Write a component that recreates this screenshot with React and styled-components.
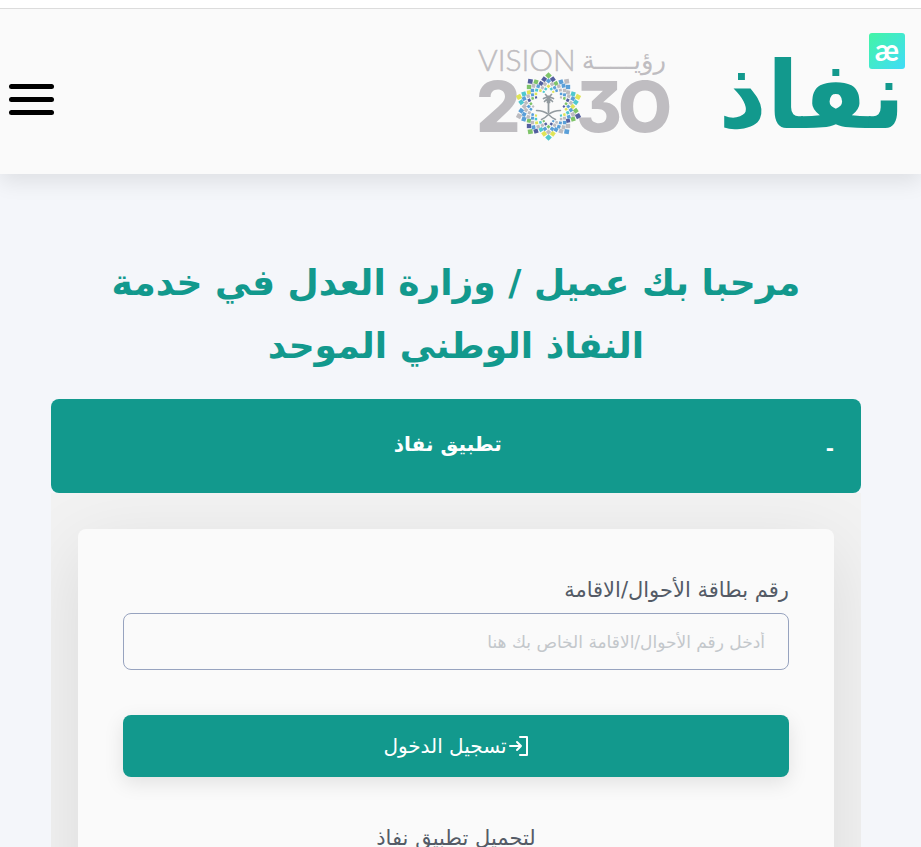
import React from "react";
import styled, { createGlobalStyle } from "styled-components";

const teal = "#12998d";
const arabic = '"DejaVu Sans", "Noto Sans", sans-serif';

const GlobalStyle = createGlobalStyle`
  *, *::before, *::after { box-sizing: border-box; }
  body { margin: 0; background: #f4f6fa; font-family: ${arabic}; color: #545b66; }
`;

const Page = styled.div`
  border-top: 8px solid #ffffff;
`;

const Header = styled.header`
  display: flex;
  align-items: flex-start;
  justify-content: space-between;
  height: 166px;
  padding: 24px 16px 0 9px;
  border-top: 1px solid #dcdcdc;
  background: #fafafa;
  box-shadow: 0 8px 20px rgba(0, 0, 0, 0.09);
  clip-path: inset(0 0 -40px 0);
`;

const Brands = styled.div`
  display: flex;
  gap: 37px;
`;

const VisionLogo = styled.svg`
  width: 206px;
  height: 120px;
`;

const BrandLink = styled.a`
  position: relative;
  display: block;
  color: ${teal};
  text-decoration: none;
`;

const Wordmark = styled.svg`
  display: block;
  width: 190px;
  height: 130px;
  overflow: visible;
`;

const Badge = styled.span`
  position: absolute;
  top: 0;
  right: 0;
  display: grid;
  place-items: center;
  width: 36px;
  height: 36px;
  padding-bottom: 4px;
  border-radius: 3px;
  background: linear-gradient(135deg, #43f5a5, #40dcf8);
  color: #ffffff;
  font: 700 30px/32px Lato, sans-serif;
`;

const MenuButton = styled.button`
  display: flex;
  flex-direction: column;
  gap: 8px;
  width: 45px;
  margin-top: 51px;
  padding: 0;
  border: 0;
  background: none;
  cursor: pointer;
`;

const MenuBar = styled.span`
  width: 100%;
  height: 5px;
  border-radius: 3px;
  background: #000000;
`;

const Main = styled.main`
  margin: 77px 60px 0 51px;
`;

const Title = styled.h1`
  margin: 0 0 22px;
  color: ${teal};
  font-size: 36px;
  line-height: 63px;
  font-weight: 700;
  text-align: center;
`;

const AccordionHeader = styled.button`
  display: flex;
  align-items: center;
  width: 100%;
  height: 94px;
  padding: 0 27px 4px;
  border: 0;
  border-radius: 8px;
  background: ${teal};
  color: #ffffff;
  font: 700 20px/32px ${arabic};
  cursor: pointer;
`;

const AccordionMark = styled.span`
  padding-top: 8px;
`;

const AccordionLabel = styled.span`
  flex: 1;
  padding-right: 8px;
  text-align: center;
`;

const Panel = styled.section`
  overflow: hidden;
  padding: 36px 27px 0;
  background: #f2f2f2;
`;

const Card = styled.form`
  display: flex;
  flex-direction: column;
  padding: 45px 45px 60px;
  border-radius: 8px;
  background: #fafafa;
  box-shadow: 0 20px 75px rgba(0, 0, 0, 0.1);
`;

const Label = styled.label`
  margin-bottom: 7px;
  font-size: 21px;
  line-height: 32px;
`;

const TextInput = styled.input`
  width: 100%;
  height: 57px;
  margin-bottom: 45px;
  padding: 0 23px;
  border: 1px solid #97a3bf;
  border-radius: 8px;
  background: transparent;
  color: #495057;
  font: 400 17px/24px ${arabic};
  &::placeholder { color: #c3c7cb; opacity: 1; }
`;

const SubmitButton = styled.button`
  display: flex;
  align-items: center;
  justify-content: center;
  gap: 2px;
  height: 62px;
  border: 0;
  border-radius: 8px;
  background: ${teal};
  color: #ffffff;
  font: 400 20px/32px ${arabic};
  box-shadow: 0 6px 20px rgba(0, 0, 0, 0.1);
  cursor: pointer;
`;

const DownloadNote = styled.p`
  margin: 45px 0 0;
  font-size: 21px;
  line-height: 32px;
  text-align: center;
`;

const palette = ["#7fc46a", "#4fc8cf", "#5a9fd8", "#535f9f", "#dfe458", "#bdbcc0"];

const tiles = [];
for (let arm = 0; arm < 10; arm++) {
  for (let ring = 0; ring < 3; ring++) {
    for (let step = -1; step <= 2; step++) {
      const away = Math.abs(step);
      tiles.push({
        angle: arm * 36 + step * 9,
        radius: 31 - ring * 5.4 - away * (3.4 - ring * 0.5),
        size: 4.7 - ring * 0.9 - away * 0.4,
        fill: palette[(arm * 5 + ring * 2 + step * 3 + ((arm * ring) % 3) + 6) % 6],
      });
    }
  }
}

function Rosette() {
  return (
    <g transform="translate(76.5 73.5)">
      {tiles.map((t, i) => (
        <rect
          key={i}
          x={-t.size / 2}
          y={-t.size / 2}
          width={t.size}
          height={t.size}
          fill={t.fill}
          transform={`rotate(${t.angle}) translate(0 ${-t.radius}) rotate(45)`}
        />
      ))}
      <g fill="none" stroke="#929a9f" strokeLinecap="round">
        <path strokeWidth="1.8" d="M0 -8V6" />
        <path strokeWidth="1.7" d="M0 -9L-4 -5M0 -9L4 -5M0 -10L-5 -8M0 -10L5 -8M-3 -12L0 -9L3 -12M-1 -9V-4M1 -9V-4" />
        <path strokeWidth="1.5" d="M-12 4Q-5 4 0 8Q4 12 7 13M12 4Q5 4 0 8Q-4 12 -7 13" />
      </g>
    </g>
  );
}

export default function App() {
  return (
    <>
      <GlobalStyle />
      <Page>
        <Header>
          <MenuButton type="button" aria-label="القائمة">
            <MenuBar />
            <MenuBar />
            <MenuBar />
          </MenuButton>
          <Brands>
            <VisionLogo viewBox="0 0 206 120" role="img" aria-label="رؤية VISION 2030">
              <g fill="#bfbdc1">
                <text x="6" y="38" fontFamily="Lato" fontWeight="300" fontSize="30" stroke="#bfbdc1" strokeWidth="0.5">VISION</text>
                <text x="194" y="36" direction="rtl" fontFamily="DejaVu Sans" fontSize="26">رؤيـــــة</text>
                <g fontFamily="Inter" fontWeight="800" fontSize="70" style={{ fontFeatureSettings: '"cv09"' }}>
                  <text x="4" y="99">2</text>
                  <text x="104" y="99">3</text>
                  <text x="146" y="99">O</text>
                </g>
              </g>
              <Rosette />
            </VisionLogo>
            <BrandLink href="#" dir="rtl">
              <Wordmark viewBox="0 0 190 130" role="img" aria-label="نفاذ">
                <text x="190" y="95" direction="rtl" fill={teal} fontFamily="DejaVu Sans" fontWeight="700" fontSize="94">نفاذ</text>
              </Wordmark>
              <Badge dir="ltr">æ</Badge>
            </BrandLink>
          </Brands>
        </Header>
        <Main dir="rtl" lang="ar">
          <Title>
            مرحبا بك عميل / وزارة العدل في خدمة
            <br />
            النفاذ الوطني الموحد
          </Title>
          <AccordionHeader type="button" aria-expanded="true">
            <AccordionMark>-</AccordionMark>
            <AccordionLabel>تطبيق نفاذ</AccordionLabel>
          </AccordionHeader>
          <Panel>
            <Card>
              <Label htmlFor="national-id">رقم بطاقة الأحوال/الاقامة</Label>
              <TextInput id="national-id" type="text" placeholder="أدخل رقم الأحوال/الاقامة الخاص بك هنا" />
              <SubmitButton type="submit">
                <svg width="20" height="22" viewBox="0 0 20 22" fill="none" stroke="currentColor" strokeWidth="2" strokeLinecap="round" strokeLinejoin="round" aria-hidden="true">
                  <path d="M11 2H18V20H11M1 11H12M8 7L12 11L8 15" />
                </svg>
                تسجيل الدخول
              </SubmitButton>
              <DownloadNote>لتحميل تطبيق نفاذ</DownloadNote>
            </Card>
          </Panel>
        </Main>
      </Page>
    </>
  );
}
